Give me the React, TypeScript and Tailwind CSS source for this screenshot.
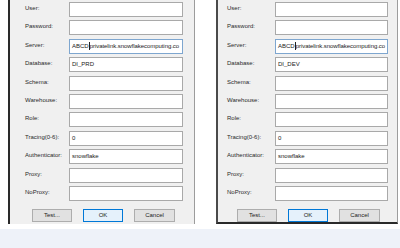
import React from 'react';

type Field = { label: string; value?: string; focused?: boolean };

const fields = (db: string): Field[] => [
    { label: 'User:' },
    { label: 'Password:' },
    { label: 'Server:', value: 'ABCD|privatelink.snowflakecomputing.co', focused: true },
    { label: 'Database:', value: db },
    { label: 'Schema:' },
    { label: 'Warehouse:' },
    { label: 'Role:' },
    { label: 'Tracing(0-6):', value: '0' },
    { label: 'Authenticator:', value: 'snowflake' },
    { label: 'Proxy:' },
    { label: 'NoProxy:' },
];

const Input: React.FC<{ field: Field; width: string }> = ({ field, width }) => {
    const parts = field.value?.split('|') ?? [];
    return (
        <div
            className={`h-[15px] ${width} bg-white border ${field.focused ? 'border-[#7ea6cf]' : 'border-[#a9a9a9]'} flex items-center pl-[2px] overflow-hidden whitespace-nowrap text-[6px] text-[#1a1a1a]`}
        >
            {parts.length > 1 ? (
                <>
                    <span>{parts[0]}</span>
                    <span className="inline-block w-px h-[8px] bg-[#222]" />
                    <span className="tracking-[-0.05px]">{parts[1]}</span>
                </>
            ) : (
                <span>{field.value}</span>
            )}
        </div>
    );
};

const DialogPanel: React.FC<{ db: string; variant: 'left' | 'right' }> = ({ db, variant }) => {
    const isLeft = variant === 'left';
    return (
        <div
            className={`h-full bg-[#f0f0f0] border-r border-r-[#9c9c9c] ${
                isLeft
                    ? 'w-[187px] border-l-2 border-l-[#2a2a2a] pl-[15px] pr-[11px]'
                    : 'w-[182px] border-l-2 border-l-[#4a4a4a] border-b-2 border-b-[#2a2a2a] pl-[9px] pr-[9px]'
            }`}
        >
            <div className="flex flex-col gap-[3.4px] pt-[2px]">
                {fields(db).map((f) => (
                    <div key={f.label} className="flex items-center justify-between">
                        <span className="text-[6px] text-[#2a2a2a] -mt-[2px]">{f.label}</span>
                        <Input field={f} width={isLeft ? 'w-[114px]' : 'w-[113px]'} />
                    </div>
                ))}
            </div>

            {/* Buttons row */}
            <div className={`flex gap-[11px] mt-[8px] ${isLeft ? 'pl-[7px]' : 'pl-[10px]'}`}>
                <button className="w-[40px] h-[13px] bg-[#e1e1e1] border border-[#adadad] text-[6px] text-[#222]">
                    Test...
                </button>
                <button className="w-[40px] h-[13px] bg-[#e5f1fb] border border-[#0078d7] text-[6px] text-[#222]">
                    OK
                </button>
                <button className="w-[41px] h-[13px] bg-[#e1e1e1] border border-[#adadad] text-[6px] text-[#222]">
                    Cancel
                </button>
            </div>
        </div>
    );
};

export default function App() {
    return (
        <div
            className="w-[400px] h-[248px] bg-white flex flex-col overflow-hidden"
            style={{ fontFamily: '"Liberation Sans", Arial, sans-serif' }}
        >
            <div className="h-[224px] flex pl-[8px]">
                <DialogPanel db="DI_PRD" variant="left" />
                <div className="w-[21px]" />
                <DialogPanel db="DI_DEV" variant="right" />
            </div>
            <div className="h-[5px]" />
            <div className="flex-1 bg-[#eef2f9]" />
        </div>
    );
}
